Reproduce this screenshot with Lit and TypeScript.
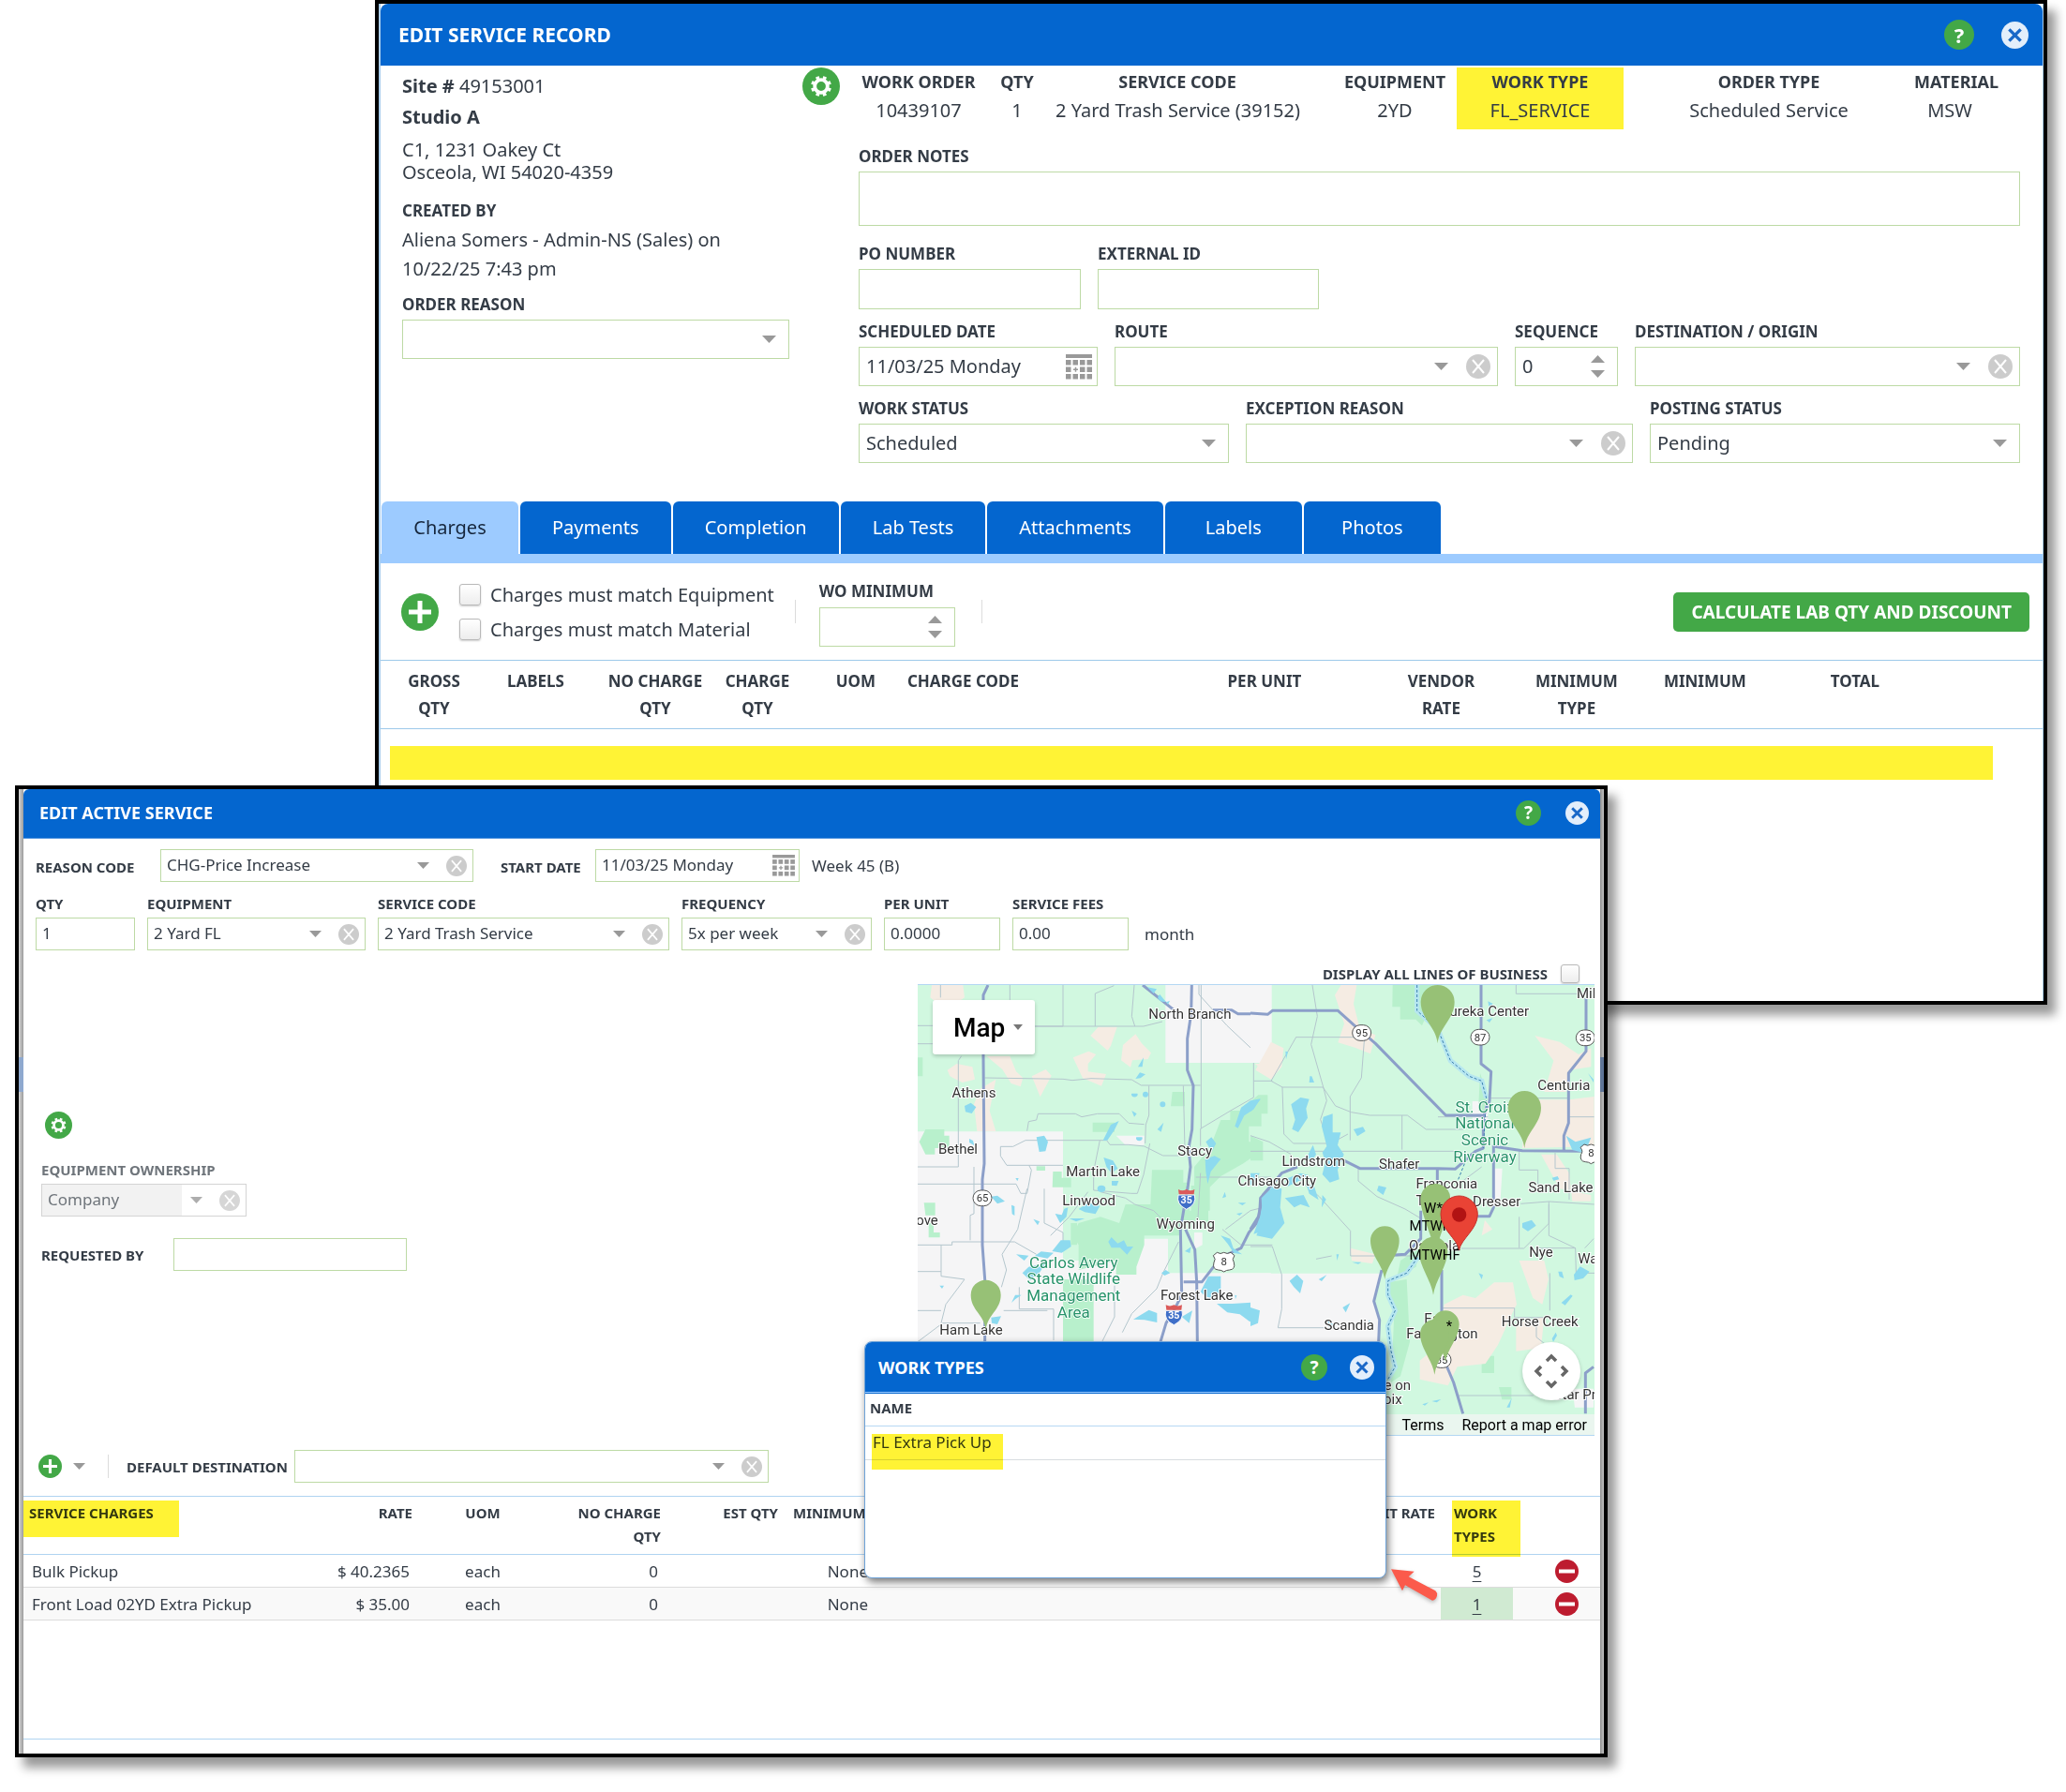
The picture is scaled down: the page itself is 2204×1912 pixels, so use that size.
import { LitElement, html, svg, css, nothing } from "lit";
import { customElement } from "lit/decorators.js";

/* ---------- shared styles ---------- */

const shared = css`
  :host { display: block; color: #343c46; font-family: "Noto Sans", "Open Sans", sans-serif; font-size: 20px; }
  * { box-sizing: border-box; }
  button, input, select, textarea { font: inherit; color: inherit; margin: 0; }
  button { display: block; padding: 0; border: 0; background: none; cursor: pointer; }
  svg { display: block; flex: none; }
  h2, p { margin: 0; font-weight: 400; }
  .bar { display: flex; align-items: center; background: #0466cf; color: #fff; }
  .bar h2 { font-weight: 700; flex: 1; }
  .help { border-radius: 50%; background: #43a847; color: #fff; font-weight: 700; text-align: center; flex: none; }
  .label { font-weight: 700; white-space: nowrap; }
  .field { display: flex; flex-direction: column; gap: 4px; min-width: 0; }
  .box { display: flex; align-items: center; background: #fff; border: 1px solid #bddaa5; min-width: 0; }
  .box input, .box select { flex: 1; width: 0; min-width: 0; height: 100%; border: 0; background: transparent; appearance: none; -moz-appearance: textfield; outline: none; padding: 0 7px 2px; }
  .box input::-webkit-inner-spin-button { appearance: none; margin: 0; }
  .spin { display: flex; flex-direction: column; gap: 8px; margin-right: 13px; }
  .check { appearance: none; flex: none; border: 1px solid #b9b9b9; border-radius: 3px; background: linear-gradient(#fff, #ededed); box-shadow: 0 1px 2px #0003; }
  .divider { width: 1px; height: 25px; background: #dcdcdc; }
  table { border-collapse: collapse; width: 100%; table-layout: fixed; }
  th { font-weight: 700; vertical-align: top; white-space: nowrap; padding: 0; }
  td { padding: 0; white-space: nowrap; }
  .marker { position: absolute; background: #fff335; mix-blend-mode: multiply; pointer-events: none; }
`;

/* ---------- icons ---------- */

const down = (w = 15, up = false) => html`<svg width=${w} height=${w > 13 ? 8 : 7} viewBox="0 0 15 8" aria-hidden="true">
  <path d=${up ? "M0 8h15L7.500 0z" : "M0 0h15L7.500 8z"} fill="#999"/></svg>`;

const gear = (s: number) => html`<svg width=${s} height=${s} viewBox="0 0 40 40" aria-hidden="true">
  <circle cx="20" cy="20" r="20" fill="#43a847"/>
  <circle cx="20" cy="20" r="6.800" fill="none" stroke="#fff" stroke-width="3.800"/>
  <circle cx="20" cy="20" r="9.600" fill="none" stroke="#fff" stroke-width="2.800" pathLength="16" stroke-dasharray="1 1" transform="rotate(11.250 20 20)"/></svg>`;

const plus = (s: number) => html`<svg width=${s} height=${s} viewBox="0 0 40 40" aria-hidden="true">
  <circle cx="20" cy="20" r="20" fill="#43a847"/><path d="M20 8v24M8 20h24" stroke="#fff" stroke-width="5"/></svg>`;

const minus = () => html`<svg width="25" height="25" viewBox="0 0 25 25" aria-hidden="true">
  <circle cx="12.500" cy="12.500" r="12.500" fill="#bd1c2f"/><path d="M4 12.500h17" stroke="#fff" stroke-width="4"/></svg>`;

const closeIcon = (s: number) => html`<svg width=${s} height=${s} viewBox="0 0 26 26" aria-hidden="true">
  <circle cx="13" cy="13" r="13" fill="#e3eefb"/><path d="M7.500 7.500l11 11M18.500 7.500l-11 11" stroke="#1a68c8" stroke-width="3"/></svg>`;

const clearIcon = (s: number) => html`<svg width=${s} height=${s} viewBox="0 0 26 26" aria-hidden="true">
  <circle cx="13" cy="13" r="13" fill="#ccc"/><path d="M7 6l12 14M19 6L7 20" stroke="#fff" stroke-width="2"/></svg>`;

const calendar = (s: number) => html`<svg width=${s} height=${s - 1} viewBox="0 0 28 27" aria-hidden="true" fill="#999">
  <rect width="28" height="4"/>
  ${[6, 13.5, 21].map(y => [0, 7.500, 15, 22.500].map(x => x === 7.5 && y === 13.5
    ? svg`<path d="M8 16.250h5M10.500 13.750v5" stroke="#999" stroke-width="1.500"/>`
    : svg`<rect x=${x} y=${y} width="5.500" height="5.500"/>`))}</svg>`;

/* ---------- form parts ---------- */

type Opt = { id: string; name: string; value?: string; clear?: boolean; big?: boolean; off?: boolean };

const selectBox = ({ id, name, value = "", clear = false, big = false, off = false }: Opt) => html`
  <div class="box ${off ? "off" : ""}">
    <select id=${id} ?disabled=${off}><option>${value}</option></select>
    <span class="arrow">${down(big ? 15 : 13)}</span>
    ${clear ? html`<button class="clear" aria-label="Clear ${name}" ?disabled=${off}>${clearIcon(big ? 26 : 22)}</button>` : nothing}
  </div>`;

const selectField = (o: Opt, cls = "") => html`
  <div class="field ${cls}"><label class="label" for=${o.id}>${o.name}</label>${selectBox(o)}</div>`;

const inputField = (id: string, name: string, value = "", cls = "") => html`
  <div class="field ${cls}"><label class="label" for=${id}>${name}</label><div class="box"><input id=${id} .value=${value}></div></div>`;

const spinBox = (id: string, value = "") => html`
  <div class="box"><input id=${id} type="number" .value=${value}>
    <span class="spin">
      <button tabindex="-1" aria-label="Increase">${down(15, true)}</button>
      <button tabindex="-1" aria-label="Decrease">${down(15)}</button>
    </span></div>`;

const cols = (widths: number[]) => {
  const total = widths.reduce((a, b) => a + b, 0);
  return html`<colgroup>${widths.map(w => html`<col style="width:${(w / total) * 100}%">`)}</colgroup>`;
};

/* ---------- service record window ---------- */

const TABS = ["Charges", "Payments", "Completion", "Lab Tests", "Attachments", "Labels", "Photos"];
const SUMMARY: [string, string, string][] = [
  ["WORK ORDER", "10439107", ""], ["QTY", "1", ""], ["SERVICE CODE", "2 Yard Trash Service (39152)", ""],
  ["EQUIPMENT", "2YD", "pad"], ["WORK TYPE", "FL_SERVICE", "hot"], ["ORDER TYPE", "Scheduled Service", ""], ["MATERIAL", "MSW", ""],
];
const CHARGE_HEADS: [string, string][] = [
  ["GROSS", "QTY"], ["LABELS", ""], ["NO CHARGE", "QTY"], ["CHARGE", "QTY"], ["UOM", ""], ["CHARGE CODE", ""],
  ["PER UNIT", ""], ["VENDOR", "RATE"], ["MINIMUM", "TYPE"], ["MINIMUM", ""], ["TOTAL", ""], ["", ""],
];

@customElement("service-record")
export class ServiceRecord extends LitElement {
  static styles = [shared, css`
    .inner { border-left: 2px solid #a9cdec; border-right: 1px solid #a9cdec; min-height: 1064px; }
    .bar { height: 66px; padding: 0 15px 0 19px; gap: 29px; border-radius: 8px 8px 0 0; }
    .bar h2 { font-size: 21px; }
    .help { width: 32px; height: 32px; font-size: 22px; line-height: 32px; }
    .label { font-size: 17px; line-height: 24px; }
    .box { height: 42px; }
    .arrow { margin-right: 13px; }
    .clear { margin: 0 7px 0 6px; }
    .body { display: flex; padding: 2px 24px 0 23px; }
    .left { flex: 413 1 0; padding-top: 8px; line-height: 24px; }
    .left .gap { margin-top: 9px; }
    .left .wide { margin-top: 11px; }
    .left .far { margin-top: 17px; }
    .left .by { line-height: 31px; margin-top: 3px; max-width: 370px; }
    .tool { margin: 0 20px 0 14px; align-self: flex-start; }
    .right { flex: 1239 1 0; min-width: 0; }
    .summary th { font-size: 18px; line-height: 30px; }
    .summary td { line-height: 32px; padding-bottom: 4px; text-align: center; }
    .summary .pad { padding-left: 36px; }
    .summary .hot { background: #fff335; }
    .notes { margin-top: 17px; }
    .notes textarea { height: 58px; border: 1px solid #bddaa5; resize: none; }
    .row { display: flex; gap: 18px; margin-top: 12px; }
    .row.first { margin-top: 18px; }
    .first .box { height: 43px; }
    .w237 { flex: 0 1 237px; }
    .w236 { flex: 0 1 236px; }
    .f255 { flex: 255 1 0; } .f409 { flex: 409 1 0; } .f110 { flex: 110 1 0; } .f411 { flex: 411 1 0; } .f395 { flex: 395 1 0; } .f413 { flex: 413 1 0; }
    .cal { margin-right: 5px; }
    .tabs { display: flex; gap: 2px; margin-top: 41px; padding-left: 1px; border-bottom: 10px solid #9dcbff; }
    .tab { height: 56px; min-width: 146px; padding: 0 34px 2px; background: #0466cf; color: #fff; border-radius: 6px 6px 0 0; }
    .tab.on { background: #9dcbff; color: #16263c; }
    .actions { display: flex; align-items: center; min-height: 103px; padding: 0 14px 0 22px; }
    .checks { display: flex; flex-direction: column; margin: 0 22px; }
    .checks label { display: flex; align-items: center; gap: 10px; height: 37px; }
    .check { width: 23px; height: 23px; margin: 0; }
    .min { width: 145px; gap: 5px; margin: 3px 28px 0 25px; }
    .calc { margin-left: auto; height: 42px; padding: 0 19px; border-radius: 5px; background: #43a847; color: #fff; font-weight: 700; font-size: 19px; }
    .charges th { font-size: 17px; line-height: 29px; padding: 7px 0; }
    .charges th:nth-child(2) { padding-right: 17px; }
    .charges th:nth-child(6) { text-align: left; }
    .charges thead { border-top: 1px solid #9ec9ea; border-bottom: 1px solid #9ec9ea; }
    .strip { height: 36px; margin: 18px 53px 0 10px; background: #fff335; }
  `];

  render() {
    return html`<div class="inner">
      <header class="bar"><h2>EDIT SERVICE RECORD</h2>
        <button class="help" aria-label="Help">?</button>
        <button aria-label="Close">${closeIcon(29)}</button></header>
      <div class="body">
        <section class="left">
          <p><b>Site #</b> 49153001</p>
          <p class="gap"><b>Studio A</b></p>
          <p class="wide">C1, 1231 Oakey Ct<br>Osceola, WI 54020-4359</p>
          <p class="label far">CREATED BY</p>
          <p class="by">Aliena Somers - Admin-NS (Sales) on 10/22/25 7:43 pm</p>
          ${selectField({ id: "reason", name: "ORDER REASON", big: true }, "wide")}
        </section>
        <button class="tool" aria-label="Settings">${gear(40)}</button>
        <section class="right">
          <table class="summary">
            ${cols([128, 82, 260, 168, 178, 310, 76, 37])}
            <thead><tr>${SUMMARY.map(([h, , c]) => html`<th class=${c}>${h}</th>`)}<th></th></tr></thead>
            <tbody><tr>${SUMMARY.map(([, v, c]) => html`<td class=${c}>${v}</td>`)}<td></td></tr></tbody>
          </table>
          <div class="field notes"><label class="label" for="notes">ORDER NOTES</label><textarea id="notes"></textarea></div>
          <div class="row first">${inputField("po", "PO NUMBER", "", "w237")}${inputField("ext", "EXTERNAL ID", "", "w236")}</div>
          <div class="row">
            <div class="field f255"><label class="label" for="sched">SCHEDULED DATE</label>
              <div class="box"><input id="sched" .value=${"11/03/25 Monday"}><button class="cal" aria-label="Pick date">${calendar(28)}</button></div></div>
            ${selectField({ id: "route", name: "ROUTE", clear: true, big: true }, "f409")}
            <div class="field f110"><label class="label" for="seq">SEQUENCE</label>${spinBox("seq", "0")}</div>
            ${selectField({ id: "dest", name: "DESTINATION / ORIGIN", clear: true, big: true }, "f411")}
          </div>
          <div class="row">
            ${selectField({ id: "status", name: "WORK STATUS", value: "Scheduled", big: true }, "f395")}
            ${selectField({ id: "exception", name: "EXCEPTION REASON", clear: true, big: true }, "f413")}
            ${selectField({ id: "posting", name: "POSTING STATUS", value: "Pending", big: true }, "f395")}
          </div>
        </section>
      </div>
      <nav class="tabs">${TABS.map((t, i) => html`<button class="tab ${i ? "" : "on"}">${t}</button>`)}</nav>
      <div class="actions">
        <button aria-label="Add charge">${plus(40)}</button>
        <div class="checks">
          <label><input type="checkbox" class="check">Charges must match Equipment</label>
          <label><input type="checkbox" class="check">Charges must match Material</label>
        </div>
        <span class="divider"></span>
        <div class="field min"><label class="label" for="womin">WO MINIMUM</label>${spinBox("womin")}</div>
        <span class="divider"></span>
        <button class="calc">CALCULATE LAB QTY AND DISCOUNT</button>
      </div>
      <table class="charges">
        ${cols([114, 120, 118, 100, 110, 269, 224, 153, 136, 138, 182, 109])}
        <thead><tr>${CHARGE_HEADS.map(([a, b]) => html`<th>${a}${b ? html`<br>${b}` : nothing}</th>`)}</tr></thead>
      </table>
      <div class="strip"></div>
    </div>`;
  }
}

/* ---------- map ---------- */

/* Two drawing sheets share one style; each is drawn at three units to the pixel. */
type Label = [number, number, string];

const WEST_TOWNS: Label[] = [[886, 127, "North Branch"], [195, 378, "Athens"], [144, 558, "Bethel"], [902, 564, "Stacy"],
  [608, 629, "Martin Lake"], [563, 724, "Linwood"], [45, 787, "ove"], [872, 798, "Wyoming"], [908, 1026, "Forest Lake"], [186, 1137, "Ham Lake"]];
const EAST_TOWNS: Label[] = [[752, 118, "Eureka Center"], [1080, 61, "Mill"], [1003, 355, "Centuria"], [202, 597, "Lindstrom"],
  [85, 660, "Chisago City"], [476, 606, "Shafer"], [628, 670, "Franconia"], [788, 726, "Dresser"], [602, 724, "Taylors"], [993, 680, "Sand Lake"], [930, 887, "Nye"],
  [588, 866, "Osceola"], [1092, 908, "Wan"], [926, 1109, "Horse Creek"], [316, 1123, "Scandia"], [613, 1148, "Farmington"],
  [600, 1100, "East"], [458, 1315, "ne on"], [448, 1360, "roix"], [1056, 1344, "Star Prai"]];

const WEST_LAKES = `M165 405l20 -10l17 14l-14 20l-20 -5z M395 505l25 -5l12 20l-8 30l-20 2z M608 515l25 -50l26 -12l-15 30l-22 32z
 M1030 470l20 -60l30 -22l32 -6l-22 34l-30 20l-20 40z M937 520l18 -15l15 20l-14 26z M935 575l30 -10l20 10l-32 40l-10 40l-6 -40z
 M590 670a12 10 0 1 0 26 0a12 10 0 1 0 -26 0z M636 645l22 0l-6 16l-16 -2z M610 570l30 10l15 25l-20 15l-16 -20z
 M250 695l20 -3l24 18l-24 8z M315 722l10 4l0 30l-8 -5z M455 750l16 30l20 -20l5 -30l-12 4l-8 20z M530 735l30 -20l38 10l-14 26l-34 -6z
 M500 765l50 0l-28 10z M385 767l20 8l-6 12z M445 870l28 -35l30 0l3 20l-30 20z M330 880l40 4l-14 16z M350 940l20 -20l55 -12l-20 30l-30 26z
 M390 885l20 -14l40 4l-20 18z M315 1035l12 -25l20 0l-20 14z M625 840l10 -15l20 20l20 -10l10 20l20 0l-20 26l-22 -22l-28 0z
 M705 1088l50 -30l26 10l0 30l-40 -8z M860 1080l34 -20l-10 40z M920 1000l25 -50l40 0l0 50l-30 20l-20 -5z M972 1038l50 0l60 -4l30 40l0 30l-36 -10l-30 -22l-40 -6z
 M1110 760l10 -60l30 -30l0 140l-30 -5l-30 10z M985 820l30 10l10 30l28 20l-26 -4l-20 -30z M870 870l20 -14l-4 20z M795 940l14 -10l14 10l-18 8z
 M250 1082l32 -4l-12 26l-18 -4z M700 365a10 8 0 1 0 18 0z M735 368a8 8 0 1 0 18 0a8 8 0 1 0 -18 0z M700 420l16 10l-8 10z M790 400a9 9 0 1 0 18 0a9 9 0 1 0 -18 0z
 M782 480l20 -22l-8 30z M720 280l18 -30l-4 30z M712 318l14 -20l18 6l-16 12z M750 25l30 6l-10 14z M790 48a14 9 0 1 0 32 20l-6 12z M180 510l12 6l4 16l-16 -10z
 M715 505a10 8 0 1 0 18 0z M1035 750l20 -4l-10 10z M1040 715l26 0l-12 8z M990 700l8 -20l4 16z M85 980l14 0l-6 10z M328 636l10 0l-4 10z M1030 1010l6 2l-4 12z`;
const EAST_LAKES = `M130 400l30 -22l28 5l-10 30l5 30l-30 46l-20 -10l10 -30z M228 470l5 -30l30 -10l0 60l26 0l-10 40l20 30l-20 50l5 30l-30 10l-24 -26l10 -40l-10 -30l14 -20z
 M330 480l30 -8l8 14l-26 16z M0 400l20 -16l12 0l-32 40z M35 700l40 -40l25 10l-5 60l14 50l-40 50l-50 -10l20 -50z M110 700l60 -10l20 40l-30 -10l-20 10z
 M180 570l20 -40l10 30l-20 30z M110 640l50 -20l30 8l-70 34z M180 660l22 -4l16 50l-30 -20z M230 690l12 14l-14 26z M0 620l30 0l-30 40z
 M870 780l30 -10l14 18l-26 18l-18 -12z M410 660l25 6l-10 24l-20 -14z M1035 945l20 -26l30 16l-20 22l-28 6z M985 935l12 0l6 22l-14 -6z M730 940l14 6l-4 14z
 M995 1035l30 -26l6 4l-24 30z M125 965l24 -20l20 20l-10 40l-20 -20z M218 960l26 -14l-16 20z M0 1050l30 10l-6 40l-24 10z M295 1050l24 -14l-14 30z M245 1085l14 14l14 10l-22 4z
 M1010 500l30 20l50 -14l-20 50l-40 -10z M755 130l20 -6l-10 14z M760 70l16 8l-12 14z M190 310l6 0l8 20l-16 0z M112 230l8 2l-6 24z M965 635l18 -5l5 10l-18 4z
 M375 1105l6 -16l4 20z M965 1150l12 -20l4 10l-12 20z M820 1370l16 -30l-6 30z M275 880l8 0l-6 20z M325 905l30 0l-10 6z M550 1360l20 -6l-12 10z M580 1350l30 -6l-14 10z M1080 300l18 20l0 10z`;

const shield = (x: number, y: number, n: string) => svg`<rect x=${x - 30} y=${y - 25} width="60" height="50" rx="25" class="sign"/><text x=${x} y=${y + 12} class="num">${n}</text>`;
const us = (x: number, y: number, n: string) => svg`<path class="sign" d="M${x - 22} ${y - 28}q11 7 22 0q11 7 22 0l12 10q-10 12 -2 22q6 22 -14 24q-10 0 -18 6q-8 -6 -18 -6q-20 -2 -14 -24q8 -10 -2 -22z"/><text x=${x} y=${y + 12} class="num">${n}</text>`;
const interstate = (x: number, y: number) => svg`<path d="M${x - 26} ${y - 14}h52q8 30 -26 46q-34 -16 -26 -46z" fill="#3f6fc8" stroke="#fff" stroke-width="3"/>
  <path d="M${x - 26} ${y - 32}q13 7 26 0q13 7 26 0l-2 16h-48z" fill="#db5a5a"/><text x=${x} y=${y + 13} class="num inter">35</text>`;
const pin = (x: number, y: number, r: number, tip: number) => svg`<path fill="#97c176" d="M${x} ${tip}C${x - 6} ${tip - r} ${x - r} ${y + r} ${x - r} ${y}A${r} ${r} 0 0 1 ${x + r} ${y}C${x + r} ${y + r} ${x + 6} ${tip - r} ${x} ${tip}z"/>`;
const names = (list: Label[]) => list.map(([x, y, t]) => svg`<text x=${x} y=${y} class="town">${t}</text>`);

@customElement("service-map")
export class ServiceMap extends LitElement {
  static styles = [shared, css`
    :host { position: relative; overflow: hidden; border-top: 1px solid #b3d7f3; border-bottom: 1px solid #b3d7f3; font-family: Roboto, "Liberation Sans", sans-serif; color: #000; }
    .sheet { width: 100%; height: 480px; }
    .town { font-size: 45px; fill: #333; stroke: #fff; stroke-width: 6px; paint-order: stroke; text-anchor: middle; }
    .park { font-size: 51px; fill: #27936a; stroke: #fff; stroke-width: 5px; paint-order: stroke; text-anchor: middle; }
    .tag { font-size: 45px; fill: #000; text-anchor: middle; }
    .num { font-size: 34px; fill: #333; text-anchor: middle; }
    .num.inter { fill: #fff; font-weight: 700; font-size: 32px; }
    .sign { fill: #fff; stroke: #555; stroke-width: 3px; }
    .hwy { fill: none; stroke: #8c9fc9; stroke-width: 9px; stroke-linejoin: round; }
    .thin { fill: none; stroke: #b4c6cd; stroke-width: 3px; }
    .water { fill: #8ddaef; }
    .type { position: absolute; left: 16px; top: 16px; display: flex; align-items: center; gap: 9px; height: 58px; padding: 0 13px 0 22px; background: #fff; font-size: 28px; font-weight: 500; border-radius: 3px; box-shadow: 0 2px 4px #0003; }
    .pan { position: absolute; right: 15px; bottom: 37px; width: 62px; height: 62px; border-radius: 50%; background: #fff; box-shadow: 0 2px 4px #0003; }
    .legal { position: absolute; right: 0; bottom: 0; display: flex; gap: 19px; height: 22px; padding: 0 8px; align-items: center; background: #f5f5f5b3; font-size: 16px; }
    .legal a { color: #000; text-decoration: none; }
  `];

  render() {
    return html`
      <svg class="sheet" viewBox="0 0 722 480" preserveAspectRatio="xMidYMin slice" role="img" aria-label="Map of service locations">
        <rect width="722" height="480" fill="#d1f8e0"/>
        <g transform="translate(-5 -6) scale(0.333333)">
          <path fill="#f5f5f6" d="M15 487h465v105h0v370h80v200H15z M808 18h340v249H808z M480 900h160l80 -70h96v110h330v220H480z"/>
          <path fill="#f5f5f6" d="M400 590h80v370h-80z M650 500h90v30h-60z M900 810h26v40l-26 14z"/>
          <path fill="#b8f0cc" d="M575 458h70v30h-70z M20 520l20 -40h60v20h16v40H70v20H40z M765 610h100v40h20v90h60v40H860v40H740v30l-25 70v25H650V900l-120 30V850l-20 -30l20 -40l70 -20l60 20l20 -60h80z
            M985 450h30v-30h30l60 -50h30v60h-20v40l-40 0v50h40v30l-60 40l-70 40l-60 60h-25v-90l50 -60z M448 615h28v20h30v30h-60z M395 598h28v14h-28z M480 960h98v200h-98z M35 715h36v40H40z M50 780h16v30h20v16H50z M15 250h16v60H15z M830 360h40v46h-45z M890 660h60v80h-60z M505 780h20v70h-20z"/>
          <path fill="#f5ece3" d="M60 18h100l5 40l-60 40l-50 -40z M110 290l30 -20l50 10l8 40l-40 10l-40 -20z M235 245h75l20 50l22 20l-8 28l-30 -10l-28 -45z M380 310l45 -22l18 20l-36 68l-16 -40z
            M512 250l50 -20l24 10l-26 30l0 25l58 8l-15 38l-60 -25z M568 180l25 -28l60 0l-20 60l-10 16z M672 210l40 -35l20 30l30 30l-10 20l-50 4l-6 22l-30 -22z M195 400l20 -50l50 -30l-20 100l20 66h-60z M1094 270h50v40z"/>
          <path class="thin" d="M15 148h50M15 206h50M88 18v40M310 18v48M480 18v132H390M583 150V45l60 -25M708 18l-8 100l10 32M388 150h350l60 -15M230 315l250 4l30 4l60 -6l130 4l30 18h190M922 18l0 460M865 340l5 200M755 340v95l-10 30l-2 60
            M365 485l5 -30l25 -5l5 -20l120 0l20 10l50 -10h70l30 30l50 4M145 600v-340l10 -15M145 600H15M300 595l-20 -30v-30h40l40 -20h260l10 14h60l50 5l60 30h50M300 595h180M598 515l-20 100l0 60l120 10h20l20 -60l20 -100M15 655h315l15 30h20l14 -75l-8 -15
            M915 18v30l90 100l85 80v150l-70 40l-100 60v55M1090 325h60M905 633h240M15 850h110l0 -10h200l70 40M90 850v100l75 10l-60 80l-15 60M15 935h75M15 1060h75M195 600v150l-12 5v80M365 670l-30 130l-50 80l14 50l-16 55M420 670v110l60 30v40M15 1160l80 -60l120 0M340 985v70h110v100M290 1060h140M645 980v100l-40 80M990 800l60 50h100M1000 800l80 -60l40 -10M850 840l-50 100l-20 50l-80 80l-30 60M560 680l-60 80l-60 60M600 680l80 20l30 20l60 20l40 40M920 620l-10 180"/>
          <path class="hwy" d="M240 18l-15 32V250L228 590l-6 50v210l8 110v200M892 18l-2 92l-12 80v100l19 50l-4 140l-11 60l6 60l-8 60l-14 80l-10 60l4 210l-25 50l-25 40l-18 60M872 800l30 65l6 105l2 190M866 968h59l60 -78l65 -30l25 -50l33 -40l4 -70l28 -30M735 18l115 92M960 98h60l20 12h100"/>
          <path class="water" d=${WEST_LAKES}/>
          ${names(WEST_TOWNS)}
          ${["Carlos Avery", "State Wildlife", "Management", "Area"].map((t, i) => svg`<text class="park" x="514" y=${923 + i * 53}>${t}</text>`)}
          ${shield(222, 700, "65")}${us(995, 902, "8")}${interstate(875, 704)}${interstate(835, 1074)}
          ${pin(233, 1010, 48, 1120)}
        </g>
        <g transform="translate(355 -6) scale(0.333333)">
          <path fill="#f5f5f6" d="M0 18h66v249H0z M0 941h415l-22 90l20 60v70H0z M710 390h50v60h-50z M780 605h26l-6 100l-20 20z M1030 1310h68v60h-60z"/>
          <path fill="#b8f0cc" d="M455 18h130l-6 60l-30 70l-20 -20h-50v-40h-25z M735 300l20 60l-6 60h-20z M440 970l60 -10l10 200l-30 110l-30 20l10 -220z M0 500l40 20v60H0z M480 900l60 -40l-10 60l-60 30z M740 1205h40v55h-40z M795 1305h40v40h-30z"/>
          <path fill="#f5ece3" d="M270 50l20 -32h50l-10 60l20 80l50 20l-16 60l-50 -20l-54 -16l20 -60z M66 200l40 20l-6 60l-34 40l-50 -30z M910 180l80 20l60 40l40 -20v60l-70 10l-10 70h-70l30 -100z M900 385h120l80 -10v160l-230 5l10 -120z
            M620 1040l60 -30l40 10l60 -50l60 0l12 70l-10 20l-50 110l-40 60l-90 10l-30 60l-90 -20v-60l60 -50z M860 900l80 0l14 60l-20 80l-30 -20z M930 560h50l40 60l10 90l60 0v-20l-100 -20z M320 860l80 20l-10 30l-66 -10z M750 770l24 30l-34 20z M850 1100l90 -20l-10 100l-80 10z"/>
          <path class="thin" d="M198 18l16 100l-20 90l40 140l10 40l-20 60l20 60M66 325l36 20h130l40 60l50 20l60 10h120l60 45l120 0M102 345l5 150l30 30h120l55 -30M145 185h220l-10 130l-36 60v140M66 325l80 -140M485 435v110M0 550h660M345 605l0 40l60 50l90 40l50 30M0 500l60 20l70 40M850 18v28h230M765 380h250M1020 440h80M600 440h160M865 718l90 -7l145 9M955 711l0 70l-80 80h-200M860 860v-100M1040 860h-120M955 720v100l85 40l2 80h60M958 1060v-120M615 1052h230v30h110M320 885h220M320 885v-80l-100 -110l-60 -50M0 855h70l30 90l0 110l-12 60h150M860 550v60h60l-0 60M975 555v50h45v100M665 1332h240M260 885l-50 10M915 1085v60l50 40M740 600l-80 60M1070 860l28 -30"/>
          <path d="M533 18v82l67 60l40 100l60 50l40 15l15 55M535 890l-35 50l-60 25v45l23 50l-23 50l10 80l13 50l-23 40" fill="none" stroke="#b7e7f0" stroke-width="16"/>
          <path class="hwy" d="M0 108l55 4l15 -12h210l50 45l70 60l225 230h120M738 18v252l32 25l-5 95l-20 50v100l-25 10l-65 57l-55 -2H350l-60 -30M598 607v53M545 740v90l-50 50l-75 5M778 530v200l-13 28h-45M780 535l90 13l190 2M1074 60v170l-56 70v160l-15 40v48M612 930v270l38 90l30 100M420 930l-25 100l18 60l-3 70M0 800l25 -40l15 -70l60 -70l50 -20M1098 1240l-26 20v130"/>
          <path d="M533 18v82l67 60l40 100l60 50l40 15l15 55l-10 160M685 590l-20 50M535 890l-35 50l-60 25v45l23 50l-23 50l10 80l13 50l-23 40" fill="none" stroke="#3a7fb0" stroke-width="3" stroke-dasharray="9 6"/>
          <path class="water" d=${EAST_LAKES}/>
          ${names(EAST_TOWNS)}
          ${["St. Croix", "National", "Scenic", "Riverway"].map((t, i) => svg`<text class="park" x="750" y=${425 + i * 53}>${t}</text>`)}
          ${shield(356, 171, "95")}${shield(735, 185, "87")}${shield(1072, 187, "35")}${us(1090, 556, "8")}${shield(612, 1218, "35")}
          ${pin(599, 72, 54, 205)}${pin(877, 410, 53, 540)}${pin(592, 702, 48, 880)}${pin(430, 836, 46, 960)}${pin(585, 870, 46, 1010)}${pin(624, 1104, 44, 1225)}${pin(589, 1135, 46, 1265)}
          <text class="tag" x="585" y="748">W*</text>
          <text class="tag" x="590" y="805">MTWHF</text><text class="tag" x="590" y="897">MTWHF</text><text class="tag" x="636" y="1125">*</text>
          <path fill="#e94335" stroke="#c5302a" stroke-width="3" d="M668 866C662 830 609 800 609 752A59 59 0 0 1 727 752C727 800 674 830 668 866z"/><circle cx="668" cy="753" r="23" fill="#b11313"/>
        </g>
      </svg>
      <button class="type">Map <svg width="10" height="6" viewBox="0 0 10 6" aria-hidden="true"><path d="M0 0h10L5 6z" fill="#777"/></svg></button>
      <button class="pan" aria-label="Map camera controls"><svg width="62" height="62" viewBox="0 0 62 62" aria-hidden="true" fill="none" stroke="#666" stroke-width="3.500">
        <path d="M26 20l5 -5l5 5M26 42l5 5l5 -5M20 26l-5 5l5 5M42 26l5 5l-5 5"/></svg></button>
      <div class="legal"><a href="#data">Google</a><a href="#terms">Terms</a><a href="#report">Report a map error</a></div>`;
  }
}

/* ---------- work types dialog ---------- */

@customElement("work-types")
export class WorkTypes extends LitElement {
  static styles = [shared, css`
    :host { border: 1px solid #6fa3d8; border-radius: 8px; background: #fff; box-shadow: 2px 4px 8px #0008; min-height: 253px; font-size: 17px; }
    .bar { height: 53px; padding: 0 12px 0 14px; gap: 24px; border-radius: 7px 7px 0 0; }
    .bar h2 { font-size: 18px; }
    .help { width: 28px; height: 28px; font-size: 19px; line-height: 28px; }
    .rule { height: 2px; background: #0466cf; border-top: 1px solid #9dcbff; }
    th { font-size: 15px; line-height: 30px; text-align: left; height: 34px; padding-left: 5px; }
    tr { border-bottom: 1px solid #b7d8f3; }
    tbody tr { border-bottom-color: #d8dce0; }
    td { position: relative; height: 36px; padding: 0 8px 2px; }
    .marker { left: 7px; top: 8px; width: 140px; height: 38px; }
  `];

  render() {
    return html`
      <header class="bar"><h2>WORK TYPES</h2><button class="help" aria-label="Help">?</button><button aria-label="Close">${closeIcon(26)}</button></header>
      <div class="rule"></div>
      <table><thead><tr><th>NAME</th></tr></thead>
        <tbody><tr><td>FL Extra Pick Up<span class="marker"></span></td></tr></tbody></table>`;
  }
}

/* ---------- active service window ---------- */

const CHARGES = [
  { name: "Bulk Pickup", rate: "$ 40.2365", types: "5", hot: false },
  { name: "Front Load 02YD Extra Pickup", rate: "$ 35.00", types: "1", hot: true },
];

@customElement("active-service")
export class ActiveService extends LitElement {
  static styles = [shared, css`
    :host { font-size: 17px; position: relative; }
    .frame { display: flex; min-height: 1029px; }
    .edge { width: 5px; background: linear-gradient(#0000 286px, #8fa9cf 286px, #8fa9cf 323px, #0000 323px), linear-gradient(90deg, #d6d6d6, #9c9c9c); }
    .edge.end { width: 4px; background: linear-gradient(#0000 286px, #5f7597 286px, #5f7597 323px, #0000 323px), linear-gradient(90deg, #8d8d8d, #c4c4c4); }
    .main { flex: 1; min-width: 0; display: flex; flex-direction: column; background: #fff; }
    .bar { height: 53px; padding: 0 12px 2px 17px; gap: 26px; border-bottom: 1px solid #5c9be0; border-radius: 6px 6px 0 0; }
    .bar h2 { font-size: 18px; }
    .help { width: 27px; height: 27px; font-size: 19px; line-height: 27px; }
    .label { font-size: 15px; line-height: 22px; }
    .box { height: 35px; }
    .box input, .box select { padding: 0 6px 2px; }
    .arrow { margin-right: 10px; }
    .clear { margin: 0 6px 0 8px; }
    .line { display: flex; align-items: center; margin: 11px 14px 0 13px; }
    .line .label { margin-top: 2px; }
    .l132 { width: 133px; } .l101 { width: 101px; margin-left: 29px; } .l141 { width: 141px; } .l179 { width: 179px; margin-left: 19px; }
    .s334 { width: 334px; } .s218 { width: 218px; } .s249 { width: 249px; } .s506 { width: 506px; }
    .cal { margin-right: 4px; }
    .week { margin-left: 13px; }
    .fields { display: flex; align-items: flex-end; gap: 13px; margin: 12px 13px 0; }
    .w106 { width: 106px; } .w233 { width: 233px; } .w311 { width: 311px; } .w203 { width: 203px; } .w124 { width: 124px; }
    .month { line-height: 35px; margin-left: 4px; }
    .middle { display: flex; margin-top: 14px; }
    .side { flex: 1; padding: 158px 0 0 19px; }
    .side .tool { margin-left: 4px; }
    .own { width: 219px; margin-top: 22px; color: #6f757b; }
    .off { border-color: #d4d4d4; }
    .box.off select { background: #f2f2f2; opacity: 1; color: #6f757b; flex: none; width: 149px; }
    .off .arrow { margin-left: auto; opacity: .8; }
    .off .clear { opacity: .8; }
    .request { display: flex; align-items: center; margin-top: 23px; }
    .where { width: 722px; margin-right: 6px; }
    .all { display: flex; justify-content: flex-end; align-items: center; gap: 14px; height: 22px; padding-right: 16px; }
    .check { width: 20px; height: 20px; margin: 0; }
    .tools { display: flex; align-items: center; padding: 15px 15px 14px 16px; }
    .more { margin: 0 24px 0 12px; }
    .grid th { position: relative; font-size: 15px; line-height: 25px; padding: 5px 6px 6px; text-align: right; }
    .grid th:nth-child(1), .grid th:nth-child(6) { text-align: left; }
    .grid th:nth-child(6) { padding-left: 10px; }
    .grid th:nth-child(3), .grid td:nth-child(3), .grid td:nth-child(9) { text-align: center; }
    .grid th:nth-child(9) { text-align: left; padding-left: 14px; }
    .grid thead { border-top: 1px solid #b0d4f1; border-bottom: 1px solid #b0d4f1; }
    .grid td { height: 35px; padding: 0 9px; text-align: right; border-bottom: 1px solid #dcdcdc; }
    .grid td:nth-child(1) { text-align: left; }
    .grid td:nth-child(6) { padding-right: 6px; }
    .grid tbody tr:nth-child(2) { background: #f9f9f9; }
    .grid td.hot { background: #d0ead2; }
    .grid td a { color: inherit; text-underline-offset: 4px; }
    .grid td:last-child { padding-left: 45px; }
    .mk1 { left: 0; top: 4px; width: 166px; height: 39px; }
    .mk2 { left: 12px; top: 4px; width: 73px; height: 60px; }
    .foot { margin-top: auto; height: 16px; border-top: 1px solid #b0d4f1; }
    .dialog { position: absolute; right: 232px; top: 589px; width: 557px; }
    .pointer { position: absolute; right: 172px; top: 828px; filter: drop-shadow(0 2px 2px #0004); }
  `];

  render() {
    return html`<div class="frame"><div class="edge"></div>
      <div class="main">
        <header class="bar"><h2>EDIT ACTIVE SERVICE</h2><button class="help" aria-label="Help">?</button><button aria-label="Close">${closeIcon(25)}</button></header>
        <div class="line">
          <label class="label l132" for="code">REASON CODE</label>
          <div class="s334">${selectBox({ id: "code", name: "REASON CODE", value: "CHG-Price Increase", clear: true })}</div>
          <label class="label l101" for="start">START DATE</label>
          <div class="box s218"><input id="start" .value=${"11/03/25 Monday"}><button class="cal" aria-label="Pick date">${calendar(24)}</button></div>
          <span class="week">Week 45 (B)</span>
        </div>
        <div class="fields">
          ${inputField("qty", "QTY", "1", "w106")}
          ${selectField({ id: "equip", name: "EQUIPMENT", value: "2 Yard FL", clear: true }, "w233")}
          ${selectField({ id: "svc", name: "SERVICE CODE", value: "2 Yard Trash Service", clear: true }, "w311")}
          ${selectField({ id: "freq", name: "FREQUENCY", value: "5x per week", clear: true }, "w203")}
          ${inputField("unit", "PER UNIT", "0.0000", "w124")}
          ${inputField("fees", "SERVICE FEES", "0.00", "w124")}
          <span class="month">month</span>
        </div>
        <div class="middle">
          <section class="side">
            <button class="tool" aria-label="Settings">${gear(29)}</button>
            ${selectField({ id: "own", name: "EQUIPMENT OWNERSHIP", value: "Company", clear: true, off: true }, "own")}
            <div class="request"><label class="label l141" for="req">REQUESTED BY</label><div class="box s249"><input id="req"></div></div>
          </section>
          <section class="where">
            <div class="all"><label class="label" for="all">DISPLAY ALL LINES OF BUSINESS</label><input id="all" type="checkbox" class="check"></div>
            <service-map></service-map>
          </section>
        </div>
        <div class="tools">
          <button aria-label="Add service charge">${plus(25)}</button>
          <button class="more" aria-label="More">${down(13)}</button>
          <span class="divider"></span>
          <label class="label l179" for="dd">DEFAULT DESTINATION</label>
          <div class="s506">${selectBox({ id: "dd", name: "DEFAULT DESTINATION", clear: true })}</div>
        </div>
        <table class="grid">
          ${cols([235, 186, 138, 127, 125, 96, 468, 137, 77, 93])}
          <thead><tr><th>SERVICE CHARGES<span class="marker mk1"></span></th><th>RATE</th><th>UOM</th><th>NO CHARGE<br>QTY</th><th>EST QTY</th><th>MINIMUM</th><th></th><th>UNIT RATE</th><th>WORK<br>TYPES<span class="marker mk2"></span></th><th></th></tr></thead>
          <tbody>${CHARGES.map(c => html`<tr><td>${c.name}</td><td>${c.rate}</td><td>each</td><td>0</td><td></td><td>None</td><td></td><td></td>
            <td class=${c.hot ? "hot" : ""}><a href="#types">${c.types}</a></td><td><button aria-label="Remove ${c.name}">${minus()}</button></td></tr>`)}</tbody>
        </table>
        <div class="foot"></div>
      </div><div class="edge end"></div></div>
      <work-types class="dialog"></work-types>
      <svg class="pointer" width="59" height="44" viewBox="300 690 177 132" aria-hidden="true"><path fill="#fb5a4b" d="M312 703l74 7l-18 17l86 45q8 8 5 16q-4 14 -15 15l-87 -49l-9 18z"/></svg>`;
  }
}

/* ---------- desktop ---------- */

@customElement("app-root")
export class AppRoot extends LitElement {
  static styles = css`
    :host { display: block; position: relative; min-height: 100vh; background: #fff; overflow: hidden; }
    .win { position: absolute; border: 4px solid #000; background: #fff; box-shadow: 9px 11px 10px #0006; }
    .record { left: 400px; right: 20px; top: 0; }
    .active { left: 16px; right: 489px; top: 838px; }
  `;

  render() {
    return html`<service-record class="win record"></service-record><active-service class="win active"></active-service>`;
  }
}
